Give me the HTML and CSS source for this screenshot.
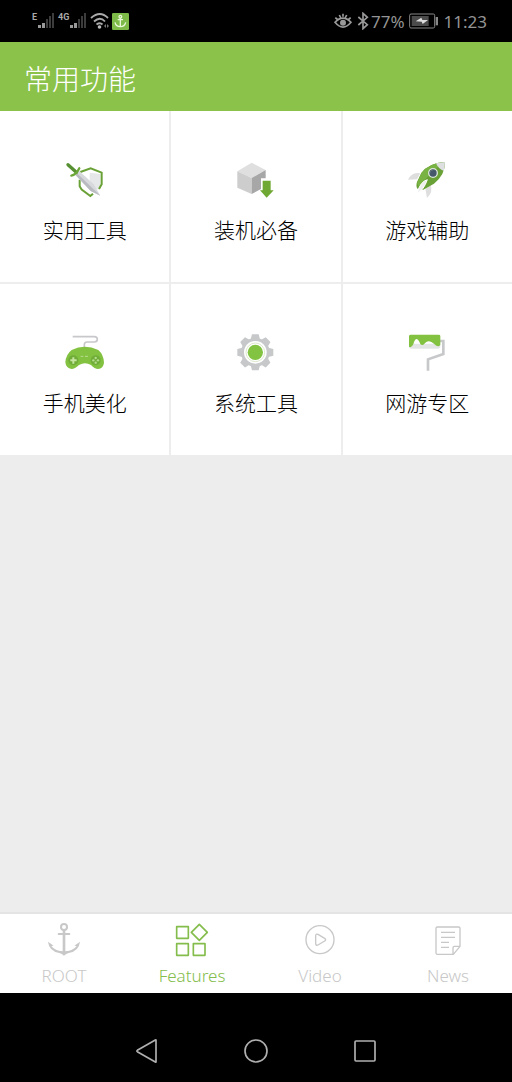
FILE: index.html
```html
<!DOCTYPE html>
<html lang="zh-CN">
<head>
<meta charset="utf-8">
<meta name="viewport" content="width=device-width, initial-scale=1">
<title>常用功能</title>
<link rel="stylesheet" href="styles.css">
</head>
<body>
<div class="status">
  <div class="status-left">
    <span class="net">E</span>
    <svg class="signal" width="18" height="18" viewBox="0 0 18 18"><path d="M1 13h3v3H1zM5 11h3v5H5z" fill="#999"/><path d="M9 7h2v9H9zM12 4h2v12h-2zM15 1h2v15h-2z" fill="#3c3c3c"/></svg>
    <span class="net">4G</span>
    <svg class="signal" width="18" height="18" viewBox="0 0 18 18"><path d="M1 13h3v3H1zM5 11h3v5H5z" fill="#999"/><path d="M9 7h2v9H9zM12 4h2v12h-2zM15 1h2v15h-2z" fill="#3c3c3c"/></svg>
    <svg class="wifi" width="20" height="18" viewBox="0 0 20 18"><g fill="none" stroke="#aaa" stroke-width="1.8"><path d="M1 6Q10-2 18 6M4 9.500Q10 4 15 9.500M6.500 12.500Q10 10 12.500 12.500"/></g><circle cx="9.500" cy="15" r="1.800" fill="#bbb"/><path d="M14 14l2-2v4zM19 14l-2-2v4z" fill="#777"/></svg>
    <svg class="app" width="17" height="17" viewBox="0 0 51 51"><rect width="51" height="51" rx="4" fill="#7dba48"/><g fill="none" stroke="#e8f8d8" stroke-width="4"><circle cx="25" cy="11" r="4"/><path d="M25 15v26M17 20h16M9 28q3 13 16 13t16-13"/></g></svg>
  </div>
  <div class="status-right">
    <svg width="18" height="18" viewBox="0 0 54 54"><g fill="none" stroke="#999" stroke-width="5"><path d="M3 31Q27 6 51 31Q27 60 3 31zM4 17l8 7M50 17l-8 7M16 9l4 8M38 9l-4 8M27 5v9"/></g><circle cx="27" cy="32" r="9" fill="#999"/></svg>
    <svg class="bt" width="12" height="18" viewBox="0 0 36 54"><path d="M4 15l27 23-13 12V4l13 12L4 39" fill="none" stroke="#999" stroke-width="5"/></svg>
    <span class="pct">77%</span>
    <svg class="battery" width="30" height="16" viewBox="0 0 90 48"><rect x="2" y="3" width="75" height="42" rx="4" fill="none" stroke="#888" stroke-width="3"/><rect x="8" y="9" width="51" height="30" fill="#4b4b4b"/><path d="M20 25l17-11 3 7h17L41 33l-3-7z" fill="#ddd"/><rect x="80" y="12" width="7" height="25" fill="#888"/></svg>
    <time>11:23</time>
  </div>
</div>
<header class="bar"><h1>常用功能</h1></header>
<main class="content">
  <div class="grid">
    <button class="cell">
      <svg width="40" height="40" viewBox="104 30 120 120"><path d="M180 64l34 6v36l-24 28-14-6-26-23" fill="#fff"/><path d="M178 68v43l26 8 6-12V72z" fill="#e5e7e8"/><path d="M150 66l31-11 33 13v35l-8 14M148 89v20l6 10 26 19 8-7" fill="none" stroke="#69a136" stroke-width="6"/><path d="M132 71l12-10 46 42 20 34-29-14z" fill="#d7d8dc"/><path d="M132 71l5-4 73 70-29-14z" fill="#b9bbc0"/><path d="M113 44l25 23" stroke="#579032" stroke-width="10" stroke-linecap="round"/><path d="M123 77q14-2 24-22" fill="none" stroke="#6da738" stroke-width="7" stroke-linecap="round"/></svg>
      <span>实用工具</span>
    </button>
    <button class="cell">
      <svg width="40" height="40" viewBox="107 30 120 120"><path d="M111 64l43-26 42 22-42 24z" fill="#dfdfdf"/><path d="M111 64l43 20v48l-43-19z" fill="#cdcdcd"/><path d="M154 84l42-24v25h-14v32l-28 15z" fill="#a7a7a7"/><path d="M187 92h24v29h9l-21 22-20-22h8z" fill="#6fa832"/></svg>
      <span>装机必备</span>
    </button>
    <button class="cell">
      <svg width="40" height="40" viewBox="111 30 120 120"><path d="M151 70q-25-6-37 19l27-1zM182 106q8 19-11 38l-5-28z" fill="#dedede"/><path d="M141 96l13-27q22-30 71-33 1 38-33 65l-32 18-16-1q-8-6-3-22z" fill="#69a136"/><path d="M141 100l13-31q22-30 71-33-40 23-77 76z" fill="#79b343"/><path d="M198 40l27-4-3 27q-17-6-24-23z" fill="#dedfe1"/><path d="M172 89q-21 5-31 41 20-9 31-41z" fill="#eee" stroke="#fff" stroke-width="3"/><circle cx="189" cy="69" r="13" fill="#44576b" stroke="#dce6db" stroke-width="4"/><path d="M180 69a9 9 0 0 1 9-9" fill="none" stroke="#60717b" stroke-width="3"/></svg>
      <span>游戏辅助</span>
    </button>
    <button class="cell">
      <svg width="40" height="40" viewBox="104 33 120 120"><path d="M127 44h65q9 0 9 8t-9 8h-22q-8 0-8 8v8" fill="none" stroke="#c8c8cb" stroke-width="5"/><path d="M124 84q39-19 80 0 16 14 17 38-2 18-18 19-10 0-21-12-18-11-36 0-13 12-22 12-17-2-19-20 2-24 19-37z" fill="#83c141"/><circle cx="129" cy="115" r="15" fill="#70ad38"/><circle cx="196" cy="115" r="15" fill="#70ad38"/><path d="M120 115h19M129 106v19" stroke="#c5e5a0" stroke-width="6"/><g fill="#b5dc8c"><circle cx="196" cy="108" r="3.500"/><circle cx="196" cy="122" r="3.500"/><circle cx="189" cy="115" r="3.500"/><circle cx="203" cy="115" r="3.500"/></g><path d="M151 103h8M164 103h9" stroke="#b7dd8e" stroke-width="3"/></svg>
      <span>手机美化</span>
    </button>
    <button class="cell">
      <svg width="40" height="40" viewBox="107 33 120 120"><g fill="#c6c8ca"><circle cx="165" cy="91" r="43"/><g id="teeth"><path d="M155 37h20l4 15h-28zM155 145h20l4-15h-28zM111 81v20l15 4V77zM219 81v20l-15 4V77z"/></g><use href="#teeth" transform="rotate(45 165 91)"/></g><circle cx="165" cy="91" r="34" fill="#fff"/><circle cx="165" cy="91" r="28" fill="none" stroke="#dce9cd" stroke-width="3"/><circle cx="165" cy="91" r="23" fill="#82c341"/></svg>
      <span>系统工具</span>
    </button>
    <button class="cell">
      <svg width="40" height="40" viewBox="111 33 120 120"><path d="M207 57h13v39l-46 16v34" fill="none" stroke="#c7c8ca" stroke-width="8"/><path d="M117 65h94v11q-2 4-7 4h-81q-6-1-6-6z" fill="#e3e5e5"/><path d="M117 42q1-4 5-4h84q5 0 5 4v26q-5 8-14 2-20-20-31-8-8 12-15 4-6-15-12-15-5 1-9 16-6 12-13 7z" fill="#83c141"/></svg>
      <span>网游专区</span>
    </button>
  </div>
</main>
<nav class="tabs">
  <a class="tab" href="#root">
    <svg width="34" height="34" viewBox="141 54 102 102"><g fill="none" stroke="#c8c8c8" stroke-width="6"><circle cx="192" cy="66" r="9"/><path d="M176 87h32" stroke-linecap="round"/><path d="M192 75v68" stroke-width="8"/></g><path d="M144 110l17 12-7 1q12 16 38 16t38-16l-7-1 17-12q-3 28-34 34-8 2-14 8-6-6-14-8-31-6-34-34z" fill="#c8c8c8"/></svg>
    <span>ROOT</span>
  </a>
  <a class="tab active" href="#features" aria-current="page">
    <svg width="34" height="34" viewBox="525 54 102 102"><g fill="none" stroke="#84bd4c" stroke-width="5" stroke-linejoin="round"><path d="M530 65h35v35h-35zM530 116h35v35h-35zM580 116h35v35h-35zM598 58l24 24-24 24-24-24z"/></g></svg>
    <span>Features</span>
  </a>
  <a class="tab" href="#video">
    <svg width="34" height="34" viewBox="141 54 102 102"><g fill="none" stroke="#c8c8c8" stroke-width="4" stroke-linejoin="round"><circle cx="192" cy="104" r="42"/><path d="M179 93q0-8 7-5l20 12q6 4 0 8l-20 12q-7 3-7-5z"/></g></svg>
    <span>Video</span>
  </a>
  <a class="tab" href="#news">
    <svg width="34" height="34" viewBox="525 54 102 102"><g fill="none" stroke="#c8c8c8" stroke-width="4" stroke-linejoin="round"><path d="M544 66h64q4 0 4 4v54l-20 24h-48q-4 0-4-4V70q0-4 4-4zM612 124h-17q-4 0-4 4v19"/><path d="M555 82h42M555 97h42M555 112h24M555 127h24"/></g></svg>
    <span>News</span>
  </a>
</nav>
<div class="sysnav">
  <button aria-label="Back"><svg width="24" height="24" viewBox="0 0 72 72"><path d="M63 3v66q0 1-2 0L7 38q-3-2 0-4L61 3q2-1 2 0z" fill="none" stroke="#b0b0b0" stroke-width="5"/></svg></button>
  <button aria-label="Home"><svg width="24" height="24" viewBox="0 0 72 72"><circle cx="36" cy="36" r="33" fill="none" stroke="#b0b0b0" stroke-width="5"/></svg></button>
  <button aria-label="Recent apps"><svg width="24" height="24" viewBox="0 0 72 72"><rect x="6" y="6" width="60" height="60" rx="3" fill="none" stroke="#b0b0b0" stroke-width="5"/></svg></button>
</div>
</body>
</html>
```
FILE: styles.css
```css
* { box-sizing: border-box; }
body {
  margin: 0;
  min-height: 100vh;
  display: flex;
  flex-direction: column;
  background: #ededed;
  font-family: "Noto Sans", "Noto Sans CJK SC", sans-serif;
}
svg { display: block; flex: none; }
button { margin: 0; padding: 0; border: 0; background: none; font: inherit; }
.status {
  height: 42px;
  padding: 0 25px 0 32px;
  display: flex;
  justify-content: space-between;
  align-items: center;
  background: #000;
  color: #949494;
  font-size: 17px;
}
.status-left, .status-right { display: flex; align-items: center; }
.net {
  align-self: flex-start;
  color: #aaa;
  font: bold 9px/10px "Roboto", sans-serif;
}
.signal { margin-right: 3px; }
.wifi { margin-right: 2px; }
.bt { margin: 0 2px 0 5px; }
.battery { margin: 0 5px 0 4px; }
.bar {
  padding: 16px 24px 13px;
  background: #8bc34a;
}
.bar h1 {
  margin: 0;
  color: #fff;
  font-family: "Noto Sans CJK SC", sans-serif;
  font-size: 28px;
  line-height: 40px;
  font-weight: 300;
}
.content { flex: 1; }
.grid {
  display: grid;
  grid-template-columns: repeat(3, 1fr);
  gap: 2px;
}
.cell {
  padding: 49px 0 38px;
  display: flex;
  flex-direction: column;
  align-items: center;
  gap: 14px;
  background: #fff;
  color: #000;
  font-family: "Noto Sans CJK SC", sans-serif;
  font-size: 21px;
  line-height: 30px;
  font-weight: 300;
}
.tabs {
  display: grid;
  grid-template-columns: repeat(4, 1fr);
  border-top: 2px solid #e4e4e4;
  background: #fff;
}
.tab {
  padding: 9px 0 5px;
  display: flex;
  flex-direction: column;
  align-items: center;
  gap: 7px;
  color: #c8c8c8;
  font-size: 17px;
  line-height: 24px;
  font-weight: 300;
  text-decoration: none;
}
.tab.active { color: #84bd4c; }
.sysnav {
  padding: 46px 0 19px;
  display: flex;
  justify-content: center;
  gap: 85px;
  background: #000;
}
```
